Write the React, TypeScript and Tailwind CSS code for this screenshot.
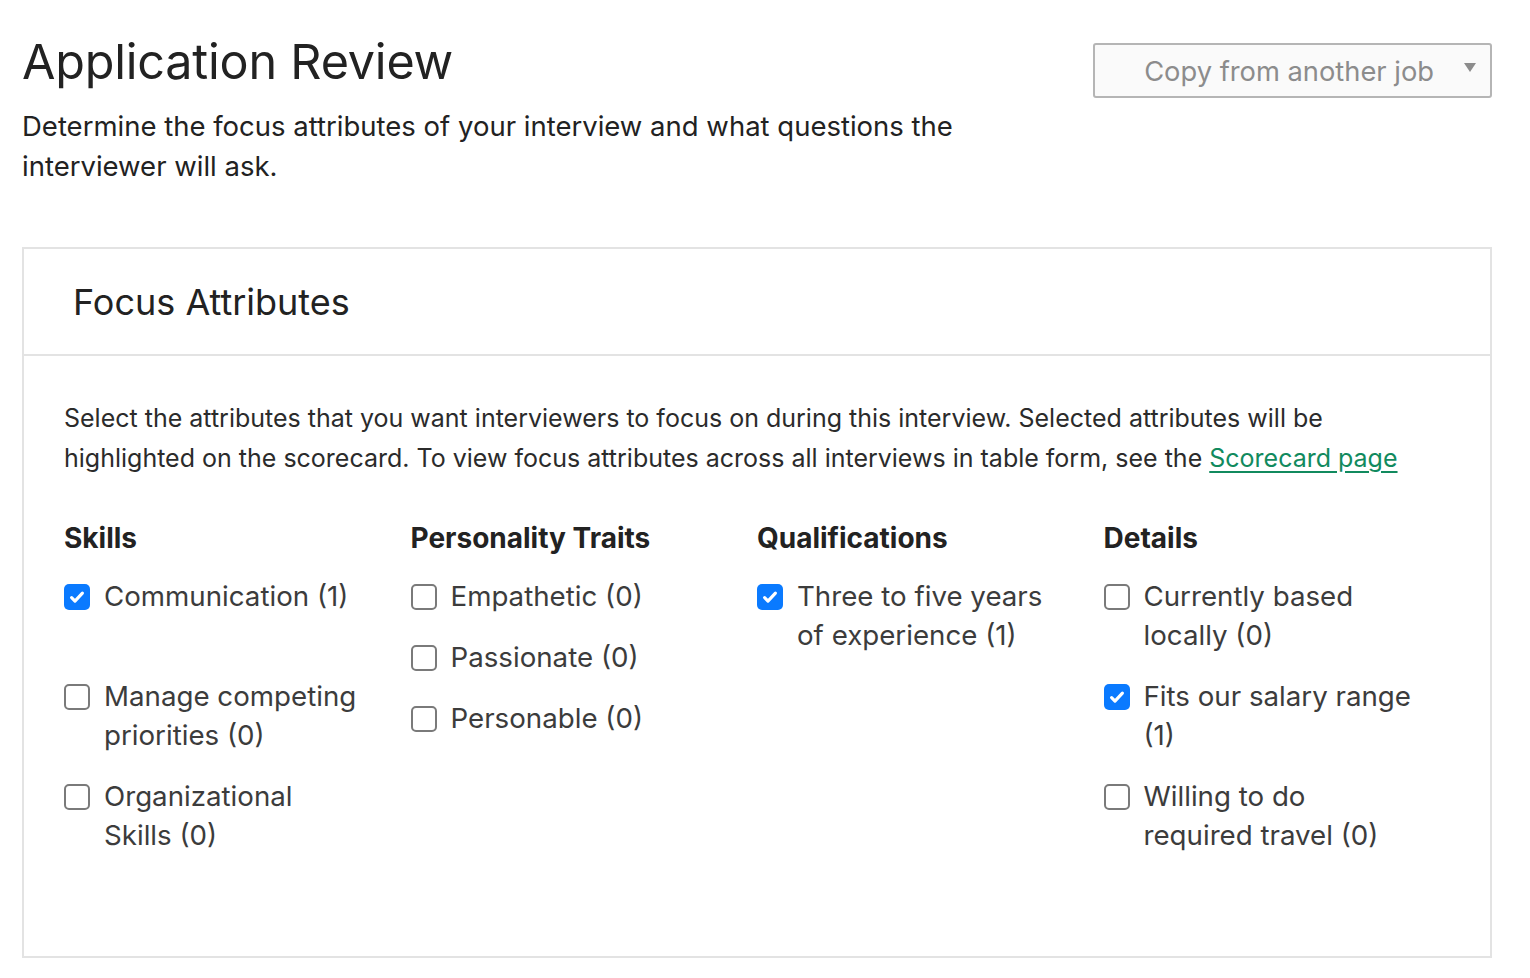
interface Attribute {
  label: string;
  checked?: boolean;
  tall?: boolean;
}

interface Group {
  title: string;
  items: Attribute[];
}

const groups: Group[] = [
  {
    title: "Skills",
    items: [
      { label: "Communication (1)", checked: true, tall: true },
      { label: "Manage competing priorities (0)" },
      { label: "Organizational\nSkills (0)" },
    ],
  },
  {
    title: "Personality Traits",
    items: [
      { label: "Empathetic (0)" },
      { label: "Passionate (0)" },
      { label: "Personable (0)" },
    ],
  },
  {
    title: "Qualifications",
    items: [{ label: "Three to five years of experience (1)", checked: true }],
  },
  {
    title: "Details",
    items: [
      { label: "Currently based locally (0)" },
      { label: "Fits our salary range (1)", checked: true },
      { label: "Willing to do required travel (0)" },
    ],
  },
];

function Checkbox({ checked }: { checked?: boolean }) {
  if (checked) {
    return (
      <span className="mt-[7px] flex h-[26px] w-[26px] flex-shrink-0 items-center justify-center rounded-[5px] bg-[#0a7aff]">
        <svg width="18" height="18" viewBox="0 0 16 16" fill="none">
          <path
            d="M3.2 8.6l3 3L12.8 4.6"
            stroke="white"
            strokeWidth="2.8"
            strokeLinecap="round"
            strokeLinejoin="round"
          />
        </svg>
      </span>
    );
  }
  return (
    <span className="mt-[7px] h-[26px] w-[26px] flex-shrink-0 rounded-[5px] border-2 border-[#7a7a7a] bg-white" />
  );
}

export default function App() {
  return (
    <div className="min-h-screen bg-white pl-[22px] pr-[38px] pt-[30px] font-['Inter',sans-serif] text-[#222]">
      {/* Page header */}
      <div className="flex items-start justify-between">
        <div>
          <h1 className="text-[48.5px] leading-[64px] tracking-[-0.2px] text-[#222]">
            Application Review
          </h1>
          <p className="mt-[12px] w-[960px] text-[27.5px] leading-[40px] text-[#222]">
            Determine the focus attributes of your interview and what questions the interviewer
            will ask.
          </p>
        </div>
        <button className="mt-[13px] flex h-[55px] w-[399px] items-center justify-end rounded-[3px] border-2 border-[#b5b5b5] bg-[#fafafa] pr-[14px]">
          <span className="mr-[30px] mt-[3px] text-[27.3px] text-[#8c8c8c]">Copy from another job</span>
          <svg width="12" height="10" viewBox="0 0 12 10" className="mb-[6px]">
            <path d="M0 0h12L6 9z" fill="#8c8c8c" />
          </svg>
        </button>
      </div>

      {/* Focus Attributes card */}
      <section className="mt-[61px] border-2 border-[#e3e3e3]">
        <div className="flex h-[107px] items-center border-b-2 border-[#e3e3e3] pl-[49px]">
          <h2 className="text-[36px] text-[#222]">Focus Attributes</h2>
        </div>
        <div className="px-[40px] pb-[79px] pt-[42px]">
          <p className="text-[25px] leading-[40px] text-[#2b2b2b]">
            Select the attributes that you want interviewers to focus on during this interview.
            Selected attributes will be
            <br />
            highlighted on the scorecard. To view focus attributes across all interviews in table
            form, see the{" "}
            <a href="#" className="text-[#118a5e] underline underline-offset-[4px]">
              Scorecard page
            </a>
          </p>

          <div className="mt-[40px] grid grid-cols-4">
            {groups.map((group) => (
              <div key={group.title} className="pr-[36px]">
                <h3 className="text-[28px] font-bold leading-[40px] text-[#222]">{group.title}</h3>
                <ul className="mt-[19px]">
                  {group.items.map((item) => (
                    <li
                      key={item.label}
                      className={`mb-[22px] flex gap-[14px] ${item.tall ? "min-h-[78px]" : ""}`}
                    >
                      <Checkbox checked={item.checked} />
                      <span className="whitespace-pre-line text-[27.7px] leading-[39px] text-[#3c3c3c]">
                        {item.label}
                      </span>
                    </li>
                  ))}
                </ul>
              </div>
            ))}
          </div>
        </div>
      </section>
    </div>
  );
}
